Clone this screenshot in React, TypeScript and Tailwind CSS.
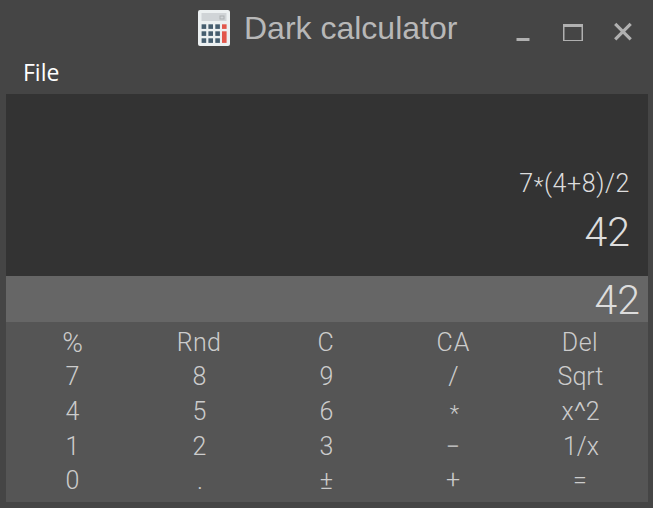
import React from "react";

type Key = { id: string; label: React.ReactNode; cls?: string };

const plain = (label: string, cls?: string): Key => ({ id: label, label, cls });

const keys: Key[] = [
  plain("%", "text-[28px] tracking-normal"),
  plain("Rnd", "tracking-[0.3px] pr-px"),
  plain("C", "pr-[2px]"),
  plain("CA", "tracking-[1px]"),
  plain("Del", "tracking-[0.5px] pr-px"),
  plain("7"),
  plain("8"),
  plain("9"),
  plain("/", "text-[26px]"),
  plain("Sqrt"),
  plain("4"),
  plain("5"),
  plain("6"),
  plain("*", "pt-[2px] pl-[2px] text-[22px]"),
  {
    id: "square",
    label: (
      <>
        x<span className="inline-block w-[12px] origin-top scale-x-[1.25] text-center">^</span>2
      </>
    ),
  },
  plain("1"),
  plain("2"),
  plain("3"),
  plain("−", "pr-px"),
  plain("1/x", "pl-px"),
  plain("0"),
  plain(".", "pl-px"),
  plain("±"),
  plain("+", "-mt-px pr-px"),
  plain("=", "pr-px"),
];

function CalculatorIcon() {
  return (
    <svg width="32" height="36" viewBox="0 0 32 36" className="block shrink-0">
      <rect width="32" height="36" rx="2" fill="#ecf0f1" />
      <rect x="3.5" y="3" width="25" height="8" fill="#d0d4d7" />
      <rect x="22" y="6" width="4" height="3" fill="#d0d4d7" stroke="#abafb1" />
      {[14.3, 21.3, 28.3].map((y) =>
        [3.6, 10.4, 17.3].map((x) => (
          <rect key={`${x}-${y}`} x={x} y={y} width="4.6" height="4.6" fill="#455d6e" />
        )),
      )}
      <rect x="24" y="14.3" width="4.6" height="4.6" fill="#e2574c" />
      <rect x="24" y="21.3" width="4.6" height="11.6" fill="#e2574c" />
    </svg>
  );
}

export default function App() {
  return (
    <div className="flex h-[508px] w-[653px] flex-col overflow-hidden bg-[#454545] pr-[5px] pb-[6px] pl-[6px] font-[Roboto,'Liberation_Sans',sans-serif] font-light">
      <header className="flex h-[58px] items-start pl-[192px]">
        <div className="pt-[10px]">
          <CalculatorIcon />
        </div>
        <h1 className="ml-[14px] w-[260px] pt-[8px] font-['Liberation_Sans',Arial,sans-serif] text-[32px] leading-[40px] font-normal whitespace-nowrap text-[#b8b8b8]">
          Dark calculator
        </h1>
        <svg width="128" height="24" viewBox="0 0 128 24" className="ml-[12px] mt-[20px] shrink-0">
          <rect x="0.5" y="18" width="13" height="3" fill="#b0b0b0" />
          <path d="M47 4h20v17H47zM48.5 7v13h17V7z" fill="#b0b0b0" fillRule="evenodd" />
          <path d="M99.2 3.8l15.5 15.5M114.7 3.8L99.2 19.3" stroke="#b0b0b0" strokeWidth="3.2" />
        </svg>
      </header>
      <nav className="h-[36px] pl-[17px] font-['Open_Sans','Noto_Sans',sans-serif] text-[23px] leading-[28px] font-normal text-white">
        File
      </nav>
      <section className="flex h-[182px] flex-col items-end bg-[#333] pt-[75px] pr-[18px] text-[#ddd]">
        <div className="h-[30px] text-[25px] leading-[30px] tracking-[0.6px] whitespace-nowrap">
          7<span className="inline-block h-[30px] pt-[3px] align-top text-[23px]">*</span>(4+8)/2
        </div>
        <div className="mt-[8px] text-[41px] leading-[50px]">42</div>
      </section>
      <section className="flex h-[46px] items-center justify-end bg-[#666] pt-px pr-[8px] text-[41px] leading-[46px] text-[#ddd]">
        42
      </section>
      <section className="grid h-[180px] grid-cols-[repeat(5,127px)] grid-rows-[34px_35px_35px_34px_35px] bg-[#555] pt-[3px] pl-[3px] text-[25px] leading-[35px] text-[#ccc]">
        {keys.map((key) => (
          <button key={key.id} className="flex items-start justify-center">
            <span className={key.cls}>{key.label}</span>
          </button>
        ))}
      </section>
    </div>
  );
}
